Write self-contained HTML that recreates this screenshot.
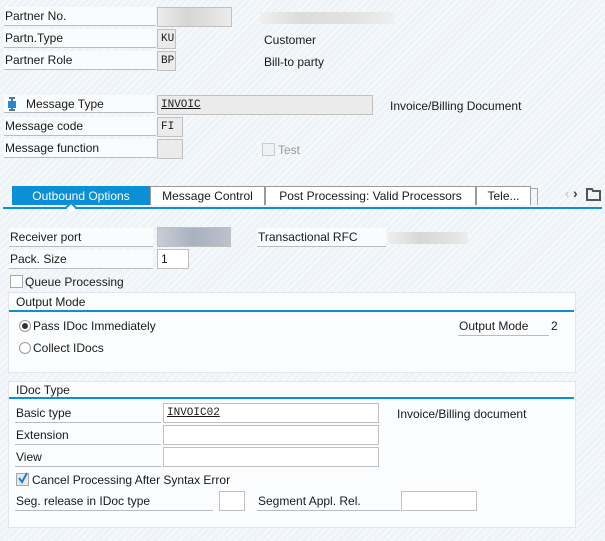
<!DOCTYPE html><html><head><style>
body{margin:0;width:605px;height:541px;overflow:hidden;font-family:"Liberation Sans",sans-serif;font-size:12px;color:#1a1a1a;
background:repeating-linear-gradient(135deg,#eef3f7 0 3px,#f6f9fb 3px 5px);position:relative}
.a{position:absolute;white-space:nowrap}
.l{position:absolute;border-bottom:1px solid #b8bcc0;height:18px;line-height:18px;padding-left:1px;background:#fafbfc;white-space:nowrap}
.i{position:absolute;border:1px solid #c0c0c0;background:#fff;line-height:18px;font-family:"Liberation Mono",monospace;font-size:11px;padding-left:3px;box-sizing:border-box;height:20px}
.g{background:#ebebeb}
.u{text-decoration:underline}
.p{position:absolute;background:#fbfcfd;border:1px solid #e2e6ea}
.bl{position:absolute;height:2px;background:#0b8fd6}
.cb{position:absolute;width:11px;height:11px;border:1px solid #a8a8a8;background:#fff}
.tab{position:absolute;top:186px;height:18px;line-height:18px;border:1px solid #9a9a9a;border-bottom:none;background:#fff;text-align:center;white-space:nowrap;box-sizing:border-box;height:19px}
.rd{position:absolute;width:10px;height:10px;border:1px solid #999;border-radius:50%;background:#fff}
</style></head><body>
<div class="l" style="left:4px;top:7px;width:151px">Partner No.</div>
<div class="i g" style="left:157px;top:7px;width:75px;background:linear-gradient(90deg,#ececec,#d6d6d6 40%,#e0e0e0 70%,#ececec)"></div>
<div class="a" style="left:260px;top:12px;width:134px;height:12px;background:linear-gradient(90deg,#f0f0f0,#dcdcdc 30%,#e2e2e2 70%,#f0f0f0)"></div>
<div class="l" style="left:4px;top:29px;width:151px">Partn.Type</div>
<div class="i g" style="left:157px;top:29px;width:19px">KU</div>
<div class="a" style="left:264px;top:33px">Customer</div>
<div class="l" style="left:4px;top:51px;width:151px">Partner Role</div>
<div class="i g" style="left:157px;top:51px;width:19px">BP</div>
<div class="a" style="left:264px;top:55px">Bill-to party</div>

<div class="l" style="left:4px;top:95px;width:151px;padding-left:22px;box-sizing:border-box">Message Type</div>
<svg class="a" style="left:8px;top:97px" width="9" height="15"><rect x="1" y="0" width="6" height="2" fill="#4a7aa0"/><rect x="0" y="4" width="8" height="7" fill="#1a8de0"/><rect x="1" y="12" width="6" height="2" fill="#4a7aa0"/><rect x="3" y="2" width="2" height="10" fill="#4a7aa0"/></svg>
<div class="i g" style="left:157px;top:95px;width:216px"><span class="u">INVOIC</span></div>
<div class="a" style="left:390px;top:99px">Invoice/Billing Document</div>
<div class="l" style="left:4px;top:117px;width:151px">Message code</div>
<div class="i g" style="left:157px;top:117px;width:26px">FI</div>
<div class="l" style="left:4px;top:139px;width:151px">Message function</div>
<div class="i g" style="left:157px;top:139px;width:26px"></div>
<div class="cb" style="left:262px;top:143px;background:#f0f0f0;border-color:#ccc"></div>
<div class="a" style="left:278px;top:143px;color:#999">Test</div>

<div class="tab" style="left:12px;width:138px;background:#0b8fd6;color:#fff;border-color:#0b8fd6">Outbound Options</div>
<div class="tab" style="left:150px;width:115px">Message Control</div>
<div class="tab" style="left:265px;width:211px">Post Processing: Valid Processors</div>
<div class="tab" style="left:476px;width:55px">Tele...</div>
<div class="a" style="left:531px;top:188px;width:6px;height:16px;border:1px solid #aaa;border-left:none;border-bottom:none"></div>
<div class="a" style="left:565px;top:186px;color:#bbb;font-size:13px">‹</div>
<div class="a" style="left:573px;top:185px;color:#444;font-size:14px;font-weight:bold">›</div>
<svg class="a" style="left:586px;top:187px" width="15" height="14"><path d="M1 2h5l1 2h7v9H1z" fill="none" stroke="#555" stroke-width="2"/></svg>
<div class="bl" style="left:3px;top:207px;width:599px"></div>
<div class="a" style="left:67px;top:203px;width:6px;height:6px;background:#fff;border-left:2px solid #0b8fd6;border-top:2px solid #0b8fd6;transform:rotate(45deg)"></div>

<div class="l" style="left:9px;top:228px;width:143px">Receiver port</div>
<div class="i" style="left:157px;top:227px;width:74px;background:linear-gradient(90deg,#c8cdd6,#a9b1bf 50%,#bcc2cc)"></div>
<div class="l" style="left:257px;top:228px;width:128px">Transactional RFC</div>
<div class="a" style="left:388px;top:232px;width:80px;height:12px;background:linear-gradient(90deg,#eee,#d8d8d8 40%,#e2e2e2 80%,#eee)"></div>
<div class="l" style="left:9px;top:250px;width:143px">Pack. Size</div>
<div class="i" style="left:157px;top:249px;width:32px;font-family:'Liberation Sans',sans-serif;font-size:12px">1</div>
<div class="cb" style="left:10px;top:275px"></div>
<div class="a" style="left:25px;top:275px">Queue Processing</div>

<div class="p" style="left:8px;top:292px;width:566px;height:79px"></div>
<div class="a" style="left:16px;top:295px">Output Mode</div>
<div class="bl" style="left:9px;top:310px;width:565px"></div>
<div class="rd" style="left:19px;top:320px"></div><div class="a" style="left:22px;top:323px;width:6px;height:6px;border-radius:50%;background:#333"></div>
<div class="a" style="left:33px;top:319px">Pass IDoc Immediately</div>
<div class="rd" style="left:19px;top:342px"></div>
<div class="a" style="left:33px;top:341px">Collect IDocs</div>
<div class="l" style="left:458px;top:317px;width:90px;background:none">Output Mode</div>
<div class="a" style="left:551px;top:319px">2</div>

<div class="p" style="left:8px;top:381px;width:566px;height:145px"></div>
<div class="a" style="left:16px;top:383px">IDoc Type</div>
<div class="bl" style="left:9px;top:397px;width:565px"></div>
<div class="l" style="left:15px;top:404px;width:145px;background:none">Basic type</div>
<div class="i" style="left:163px;top:403px;width:216px"><span class="u">INVOIC02</span></div>
<div class="a" style="left:397px;top:407px">Invoice/Billing document</div>
<div class="l" style="left:15px;top:426px;width:145px;background:none">Extension</div>
<div class="i" style="left:163px;top:425px;width:216px"></div>
<div class="l" style="left:15px;top:448px;width:145px;background:none">View</div>
<div class="i" style="left:163px;top:447px;width:216px"></div>
<div class="cb" style="left:16px;top:473px;background:#e8e8e8"></div>
<svg class="a" style="left:16px;top:472px" width="13" height="13"><path d="M3 6l3 4 5-9" fill="none" stroke="#1c7fd0" stroke-width="2"/></svg>
<div class="a" style="left:32px;top:473px">Cancel Processing After Syntax Error</div>
<div class="l" style="left:15px;top:492px;width:197px;background:none">Seg. release in IDoc type</div>
<div class="i" style="left:219px;top:491px;width:26px"></div>
<div class="l" style="left:257px;top:492px;width:142px;background:none">Segment Appl. Rel.</div>
<div class="i" style="left:401px;top:491px;width:76px"></div>
</body></html>
